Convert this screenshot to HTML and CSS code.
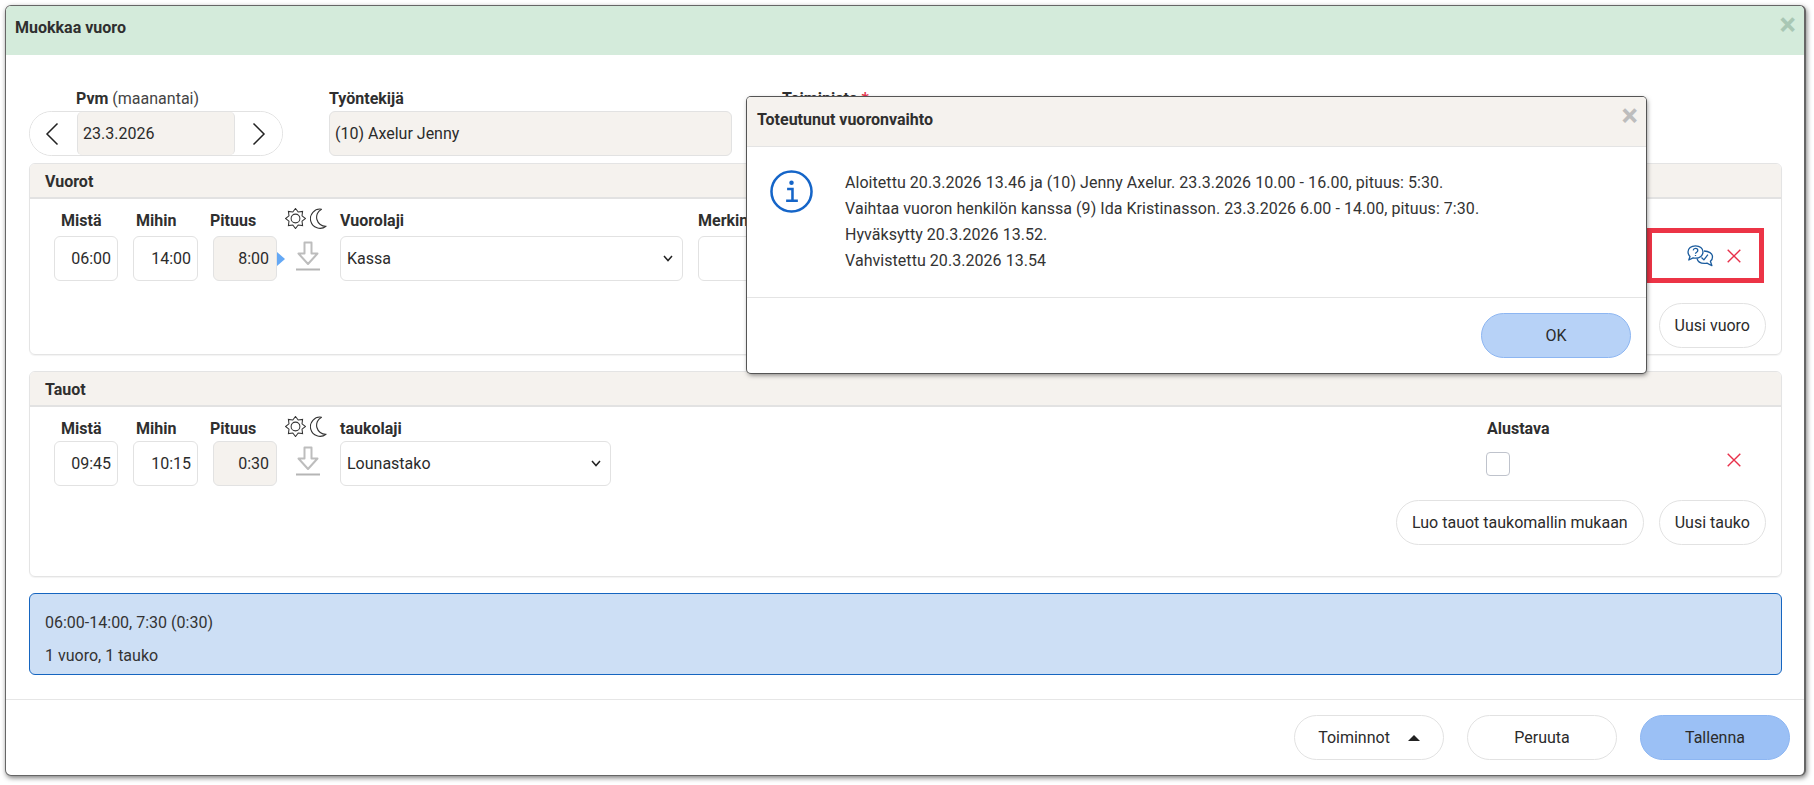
FILE: index.html
```html
<!DOCTYPE html>
<html lang="fi">
<head>
<meta charset="utf-8">
<title>Muokkaa vuoro</title>
<link rel="stylesheet" href="styles.css">
</head>
<body>
<svg class="defs" width="0" height="0" aria-hidden="true">
  <symbol id="sun" viewBox="0 0 22 22"><path d="M11 .5L13.830 4.160 18.420 3.580 17.840 8.170 21.500 11 17.840 13.830 18.420 18.420 13.830 17.840 11 21.500 8.170 17.840 3.580 18.420 4.160 13.830 .5 11 4.160 8.170 3.580 3.580 8.170 4.160z" fill="none" stroke="currentColor" stroke-width="1.100" stroke-linejoin="miter"/><circle cx="11" cy="11" r="4.600" fill="none" stroke="currentColor" stroke-width="1.100"/></symbol>
  <symbol id="moon" viewBox="0 0 17 21"><path d="M11.500 1.200A9.600 9.600 0 1 0 16 18.200 9 9 0 0 1 11.500 1.200z" fill="none" stroke="currentColor" stroke-width="1.100" stroke-linejoin="round"/></symbol>
  <symbol id="copy" viewBox="0 0 26 30"><path d="M9.500 1.500h7v11h6L13 23 3.500 12.500h6z" fill="none" stroke="#bdbdbd" stroke-width="2" stroke-linejoin="round"/><path d="M1 28.500h24" stroke="#b5b5b5" stroke-width="2"/></symbol>
  <symbol id="cross" viewBox="0 0 14 14"><path d="M.7.7l12.600 12.600M13.300.7L.7 13.300" stroke="currentColor" stroke-width="1.400" fill="none"/></symbol>
</svg>

<main class="modal">
  <header class="modal-head">
    <h1 class="modal-title">Muokkaa vuoro</h1>
    <span class="close close-green">×</span>
  </header>

  <div class="modal-body">
    <div class="top-row">
      <div class="field field-date">
        <label class="top-label top-label-date"><b>Pvm</b> (maanantai)</label>
        <div class="date-group">
          <button class="date-nav date-prev" aria-label="Edellinen"><svg width="14" height="24" viewBox="0 0 14 24"><path d="M12.500 1.500L2 12l10.500 10.500" fill="none" stroke="#222" stroke-width="1.500"/></svg></button>
          <div class="date-value">23.3.2026</div>
          <button class="date-nav date-next" aria-label="Seuraava"><svg width="14" height="24" viewBox="0 0 14 24"><path d="M1.500 1.500L12 12 1.500 22.500" fill="none" stroke="#222" stroke-width="1.500"/></svg></button>
        </div>
      </div>
      <div class="field field-employee">
        <label class="top-label"><b>Työntekijä</b></label>
        <div class="readonly-box">(10) Axelur Jenny</div>
      </div>
      <div class="field field-unit">
        <label class="top-label"><b>Toimipiste</b> <span class="req">*</span></label>
      </div>
    </div>

    <section class="panel panel-shifts">
      <h2 class="panel-head">Vuorot</h2>
      <div class="label-row">
        <span class="lab lab-time">Mistä</span>
        <span class="lab lab-time2">Mihin</span>
        <span class="lab lab-time">Pituus</span>
        <span class="lab-icons"><svg class="ic-sun"><use href="#sun"/></svg><svg class="ic-moon"><use href="#moon"/></svg></span>
        <span class="lab lab-type">Vuorolaji</span>
        <span class="lab lab-note">Merkintä</span>
        <span class="lab">Alustava</span>
      </div>
      <div class="input-row">
        <div class="time">06:00</div>
        <div class="time time-w">14:00</div>
        <div class="time time-ro">8:00</div>
        <div class="copy-col"><span class="tri"></span><svg class="ic-copy"><use href="#copy"/></svg></div>
        <div class="select select-shift">Kassa<svg class="chev" width="10" height="7" viewBox="0 0 10 7"><path d="M1 1l4 4.500L9 1" fill="none" stroke="#222" stroke-width="1.500"/></svg></div>
        <div class="note-input"></div>
        <div class="row-actions">
          <svg class="ic-chat" width="27" height="22" viewBox="0 0 27 22" fill="none" stroke="#1b5c9e" stroke-width="1.300" stroke-linejoin="round"><path d="M8.500.8c4.300 0 7.500 2.600 7.500 6.200s-3.200 6.200-7.500 6.200c-.9 0-1.700-.1-2.400-.3L1.800 15l1.200-3.500C1.700 10.300 1 8.800 1 7 1 3.400 4.200.8 8.500.8z" fill="#fff"/><path d="M17 6c4.700 0 8.500 2.400 8.500 5.900 0 1.800-.8 3.300-2.100 4.400l1.500 4.400-4.900-2.600c-.9.200-1.700.3-2.600.3-3.700 0-6.800-2-7.400-5" /><path d="M6.200 5.400c.2-1.300 1.100-2 2.300-2 1.400 0 2.300.8 2.300 2 0 1.900-2.300 1.700-2.300 3.400M8.500 10v1.100" /><path d="M14.500 12.500l2.400 2.400 4-5.200" /></svg>
          <svg class="ic-x ic-x-shift"><use href="#cross"/></svg>
        </div>
      </div>
      <div class="btn-row btn-row-shifts"><button class="btn">Uusi vuoro</button></div>
    </section>

    <section class="panel panel-breaks">
      <h2 class="panel-head">Tauot</h2>
      <div class="label-row label-row-breaks">
        <span class="lab lab-time">Mistä</span>
        <span class="lab lab-time2">Mihin</span>
        <span class="lab lab-time">Pituus</span>
        <span class="lab-icons"><svg class="ic-sun"><use href="#sun"/></svg><svg class="ic-moon"><use href="#moon"/></svg></span>
        <span class="lab lab-type-break">taukolaji</span>
        <span class="lab">Alustava</span>
      </div>
      <div class="input-row">
        <div class="time">09:45</div>
        <div class="time time-w">10:15</div>
        <div class="time time-ro">0:30</div>
        <div class="copy-col copy-col-plain"><svg class="ic-copy"><use href="#copy"/></svg></div>
        <div class="select select-break">Lounastako<svg class="chev" width="10" height="7" viewBox="0 0 10 7"><path d="M1 1l4 4.500L9 1" fill="none" stroke="#222" stroke-width="1.500"/></svg></div>
        <div class="check-col"><span class="check"></span></div>
        <svg class="ic-x ic-x-break"><use href="#cross"/></svg>
      </div>
      <div class="btn-row btn-row-breaks">
        <button class="btn">Luo tauot taukomallin mukaan</button>
        <button class="btn">Uusi tauko</button>
      </div>
    </section>

    <section class="summary">
      <p>06:00-14:00, 7:30 (0:30)</p>
      <p>1 vuoro, 1 tauko</p>
    </section>
  </div>

  <footer class="modal-foot">
    <button class="btn btn-foot">Toiminnot<span class="caret"></span></button>
    <button class="btn btn-foot">Peruuta</button>
    <button class="btn btn-foot btn-primary">Tallenna</button>
  </footer>

  <div class="highlight"></div>
</main>

<aside class="dialog">
  <header class="dialog-head">
    <h2 class="dialog-title">Toteutunut vuoronvaihto</h2>
    <span class="close">×</span>
  </header>
  <div class="dialog-body">
    <svg class="ic-info" width="43" height="43" viewBox="0 0 44 44" fill="none" stroke="#1565c8"><circle cx="22" cy="22" r="20.500" stroke-width="2.600"/><circle cx="22" cy="13" r="2.300" fill="#1565c8" stroke="none"/><path d="M17.500 19.500H23V31M16.500 31.500h12" stroke-width="2.600"/></svg>
    <div class="dialog-text">
      <p>Aloitettu 20.3.2026 13.46 ja (10) Jenny Axelur. 23.3.2026 10.00 - 16.00, pituus: 5:30.</p>
      <p>Vaihtaa vuoron henkilön kanssa (9) Ida Kristinasson. 23.3.2026 6.00 - 14.00, pituus: 7:30.</p>
      <p>Hyväksytty 20.3.2026 13.52.</p>
      <p>Vahvistettu 20.3.2026 13.54</p>
    </div>
  </div>
  <footer class="dialog-foot"><button class="btn btn-ok">OK</button></footer>
</aside>
</body>
</html>
```
FILE: styles.css
```css
* { box-sizing: border-box; }
html, body { height: 100%; }
body {
  margin: 0;
  background: #fff;
  font-family: Roboto, "Liberation Sans", sans-serif;
  font-size: 16px;
  color: #2b2b2b;
  overflow: hidden;
  position: relative;
}
p, h1, h2 { margin: 0; }
button { font: inherit; color: inherit; }
.defs { position: absolute; }

.modal {
  position: relative;
  display: flex;
  flex-direction: column;
  width: 1801px;
  height: 771px;
  margin: 5px 0 0 5px;
  background: #fff;
  border: 1px solid #666;
  border-right-width: 2px;
  border-radius: 6px;
  box-shadow: 1px 2px 5px rgba(0,0,0,.5);
}
.modal-head {
  display: flex;
  justify-content: space-between;
  align-items: flex-start;
  height: 49px;
  padding: 12px 8px 0 9px;
  background: #d4ebdb;
  border-radius: 5px 5px 0 0;
}
.modal-title, .dialog-title { font-size: 16px; font-weight: 700; line-height: 20px; color: #2f2f2f; }
.close { font-size: 31px; line-height: 20px; font-weight: 700; color: #bdbdbd; }
.close-green { color: #a9c7b4; margin-top: -3px; }

.modal-body { flex: 1; padding: 0 22px 0 23px; min-height: 0; }

.top-row { display: flex; height: 108px; padding-top: 34px; }
.field { display: flex; flex-direction: column; }
.field-date { width: 254px; margin-right: 46px; }
.field-employee { width: 403px; margin-right: 50px; }
.top-label { height: 22px; line-height: 20px; color: #444; }
.top-label b { color: #2f2f2f; }
.top-label-date { padding-left: 47px; }
.req { color: #e8304a; font-weight: 700; }
.date-group { display: flex; height: 45px; border: 1px solid #e2e2e2; border-radius: 23px; overflow: hidden; }
.date-nav { width: 47px; padding: 0; border: 0; background: #fff; display: flex; align-items: center; justify-content: center; }
.date-prev svg { margin-right: 4px; }
.date-value { flex: 1; display: flex; align-items: center; padding-left: 5px; background: #f5f2ee; border-left: 1px solid #e2e2e2; border-right: 1px solid #e2e2e2; border-radius: 5px; }
.readonly-box { height: 45px; display: flex; align-items: center; padding-left: 5px; background: #f5f2ee; border: 1px solid #e2e2e2; border-radius: 6px; }

.panel { border: 1px solid #e4e4e4; border-radius: 6px; box-shadow: 0 1px 1px rgba(0,0,0,.05); }
.panel-shifts { height: 192px; margin-bottom: 16px; }
.panel-breaks { height: 206px; margin-bottom: 16px; }
.panel-head { height: 35px; padding: 0 15px; font-size: 16px; font-weight: 700; line-height: 36px; color: #2f2f2f; background: #f5f2ee; border-bottom: 2px solid #e2e2e2; border-radius: 5px 5px 0 0; overflow: hidden; }

.label-row { display: flex; align-items: center; height: 37px; padding: 5px 0 0 31px; }
.label-row-breaks { height: 34px; padding-top: 8px; }
.lab { font-weight: 700; color: #2f2f2f; }
.lab-time { width: 75px; }
.lab-time2 { width: 74px; }
.lab-icons { display: flex; align-items: center; width: 55px; height: 22px; margin-top: -4px; color: #333; }
.ic-sun { width: 21px; height: 21px; }
.ic-moon { width: 17px; height: 21px; margin-left: 4px; }
.lab-type { width: 358px; }
.lab-note { width: 789px; }
.lab-type-break { width: 1147px; }

.input-row { display: flex; align-items: flex-start; height: 45px; padding-left: 24px; }
.time { width: 64px; height: 45px; margin-right: 15px; line-height: 43px; padding-right: 6px; text-align: right; border: 1px solid #e2e2e2; border-radius: 6px; background: #fff; }
.time-w { width: 65px; }
.time-ro { margin-right: 0; padding-right: 7px; background: #f5f2ee; }
.copy-col { display: flex; align-items: center; width: 63px; height: 45px; }
.tri { width: 0; height: 0; border-left: 8px solid #64a8f5; border-top: 7px solid transparent; border-bottom: 7px solid transparent; }
.ic-copy { display: block; width: 26px; height: 30px; align-self: flex-start; margin: 5px 0 0 10px; }
.copy-col-plain .ic-copy { margin-left: 18px; }
.select { position: relative; display: flex; align-items: center; height: 45px; padding-left: 6px; border: 1px solid #e2e2e2; border-radius: 6px; background: #fff; }
.chev { position: absolute; right: 9px; top: 18px; }
.select-shift { width: 343px; margin-right: 15px; }
.select-break { width: 271px; margin-right: 875px; }
.note-input { width: 700px; height: 45px; border: 1px solid #e2e2e2; border-radius: 6px; }
.row-actions { display: flex; align-items: flex-start; margin-left: 289px; padding-top: 9px; }
.ic-chat { flex: none; }
.ic-x { display: block; width: 14px; height: 14px; color: #e8304a; }
.ic-x-shift { margin: 4px 0 0 13px; }
.check-col { width: 241px; padding-top: 11px; }
.check { display: block; width: 24px; height: 24px; border: 1px solid #bfc3cc; border-radius: 4px; background: #fff; }
.ic-x-break { margin-top: 12px; }

.btn-row { display: flex; justify-content: flex-end; gap: 15px; padding-right: 15px; }
.btn-row-shifts { margin-top: 22px; }
.btn-row-breaks { margin-top: 14px; }
.btn { height: 45px; padding: 0 15px; background: #fff; border: 1px solid #e2e2e2; border-radius: 23px; cursor: pointer; }

.summary { height: 82px; padding: 12px 15px; background: #cddff5; border: 1px solid #1565c0; border-radius: 6px; }
.summary p { height: 33px; line-height: 33px; color: #333; }

.modal-foot { display: flex; justify-content: flex-end; gap: 23px; height: 76px; padding: 15px 14px 0 0; border-top: 1px solid #e6e6e6; }
.btn-foot { width: 150px; display: flex; align-items: center; justify-content: center; }
.btn-primary { background: #9bc0f5; border-color: #8db6f2; }
.caret { width: 0; height: 0; margin-left: 18px; border-left: 6px solid transparent; border-right: 6px solid transparent; border-bottom: 6px solid #222; }

.highlight { position: absolute; left: 1641px; top: 222px; width: 117px; height: 55px; border: 5px solid #ec3446; pointer-events: none; }

.dialog { position: absolute; left: 747px; top: 97px; width: 899px; height: 276px; display: flex; flex-direction: column; background: #fff; border-radius: 4px; box-shadow: 0 0 0 1px #555, 1px 2px 5px rgba(0,0,0,.5); }
.dialog-head { display: flex; justify-content: space-between; align-items: flex-start; height: 50px; padding: 13px 8px 0 10px; background: #f5f2ee; border-bottom: 1px solid #e4e4e4; border-radius: 4px 4px 0 0; }
.dialog-head .close { margin-top: -4px; }
.dialog-body { display: flex; flex: 1; padding: 23px 0 0 23px; }
.ic-info { flex: none; margin-right: 32px; }
.dialog-text p { height: 26px; line-height: 26px; color: #333; letter-spacing: .05px; }
.dialog-foot { display: flex; justify-content: flex-end; height: 76px; padding: 15px 15px 0 0; border-top: 1px solid #e4e4e4; }
.btn-ok { width: 150px; background: #b7d2f7; border-color: #8db6f2; }
```
